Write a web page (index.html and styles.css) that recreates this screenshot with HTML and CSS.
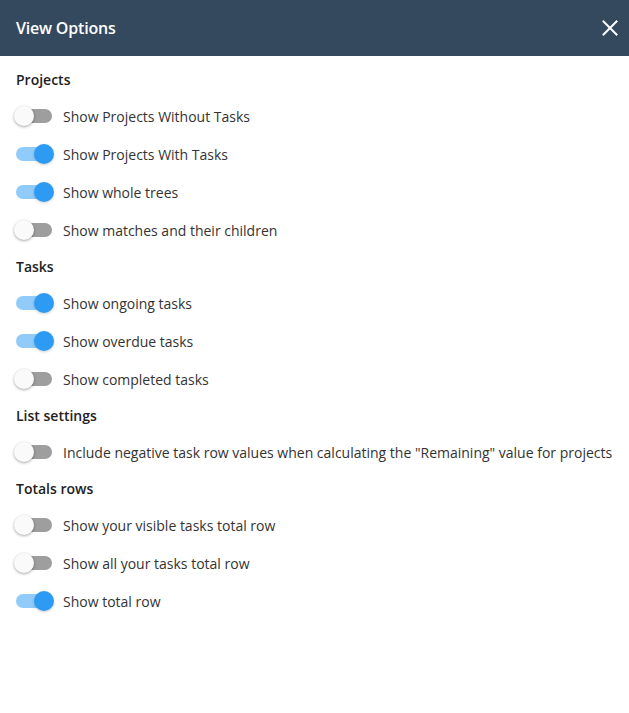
FILE: index.html
```html
<!DOCTYPE html>
<html>
<head>
<meta charset="utf-8">
<link rel="stylesheet" href="styles.css">
</head>
<body>
<div class="dialog">
  <header class="topbar">
    <h1 class="title">View Options</h1>
    <button class="close" aria-label="Close">
      <svg width="16" height="16" viewBox="0 0 16 16"><path d="M1.5 1.5 L14.5 14.5 M14.5 1.5 L1.5 14.5" stroke="#fff" stroke-width="2" stroke-linecap="square"/></svg>
    </button>
  </header>
  <main class="content">
    <h2 class="section">Projects</h2>
    <label class="row"><span class="toggle"><span class="track"></span><span class="knob"></span></span><span class="text">Show Projects Without Tasks</span></label>
    <label class="row"><span class="toggle on"><span class="track"></span><span class="knob"></span></span><span class="text">Show Projects With Tasks</span></label>
    <label class="row"><span class="toggle on"><span class="track"></span><span class="knob"></span></span><span class="text">Show whole trees</span></label>
    <label class="row"><span class="toggle"><span class="track"></span><span class="knob"></span></span><span class="text">Show matches and their children</span></label>

    <h2 class="section">Tasks</h2>
    <label class="row"><span class="toggle on"><span class="track"></span><span class="knob"></span></span><span class="text">Show ongoing tasks</span></label>
    <label class="row"><span class="toggle on"><span class="track"></span><span class="knob"></span></span><span class="text">Show overdue tasks</span></label>
    <label class="row"><span class="toggle"><span class="track"></span><span class="knob"></span></span><span class="text">Show completed tasks</span></label>

    <h2 class="section">List settings</h2>
    <label class="row"><span class="toggle"><span class="track"></span><span class="knob"></span></span><span class="text">Include negative task row values when calculating the "Remaining" value for projects</span></label>

    <h2 class="section">Totals rows</h2>
    <label class="row"><span class="toggle"><span class="track"></span><span class="knob"></span></span><span class="text">Show your visible tasks total row</span></label>
    <label class="row"><span class="toggle"><span class="track"></span><span class="knob"></span></span><span class="text">Show all your tasks total row</span></label>
    <label class="row"><span class="toggle on"><span class="track"></span><span class="knob"></span></span><span class="text">Show total row</span></label>
  </main>
</div>
</body>
</html>
```
FILE: styles.css
```css
* { box-sizing: border-box; }
html, body { margin: 0; padding: 0; background: #fff; }
body {
  font-family: "Open Sans", "Noto Sans", "Liberation Sans", sans-serif;
  color: #333;
  font-size: 14px;
}
.topbar {
  height: 56px;
  background: #34495e;
  display: flex;
  align-items: center;
  justify-content: space-between;
  padding: 0 11px 0 16px;
}
.title {
  margin: 0;
  font-size: 16px;
  font-weight: 600;
  color: #fff;
  letter-spacing: -0.2px;
}
.close {
  background: none;
  border: 0;
  padding: 0;
  width: 16px;
  height: 16px;
  display: flex;
  cursor: pointer;
}
.content {
  padding: 6px 16px 0 16px;
  display: flex;
  flex-direction: column;
}
.section {
  margin: 0;
  height: 35px;
  display: flex;
  align-items: center;
  font-size: 14px;
  font-weight: 600;
  color: #222;
}
.row {
  height: 38px;
  display: flex;
  align-items: center;
  gap: 11px;
  white-space: nowrap;
}
.text {
  font-size: 14px;
  color: #333;
}
.toggle {
  position: relative;
  width: 36px;
  height: 20px;
  flex: none;
}
.track {
  position: absolute;
  left: 0;
  top: 3px;
  width: 36px;
  height: 14px;
  border-radius: 7px;
  background: #9e9e9e;
}
.knob {
  position: absolute;
  top: 0;
  left: -2px;
  width: 20px;
  height: 20px;
  border-radius: 50%;
  background: #fafafa;
  box-shadow: 0 1px 3px rgba(0,0,0,0.35);
}
.toggle.on .track { background: #90cbf9; }
.toggle.on .knob { left: 18px; background: #2d9bf4; box-shadow: 0 1px 3px rgba(0,0,0,0.2); }
```
